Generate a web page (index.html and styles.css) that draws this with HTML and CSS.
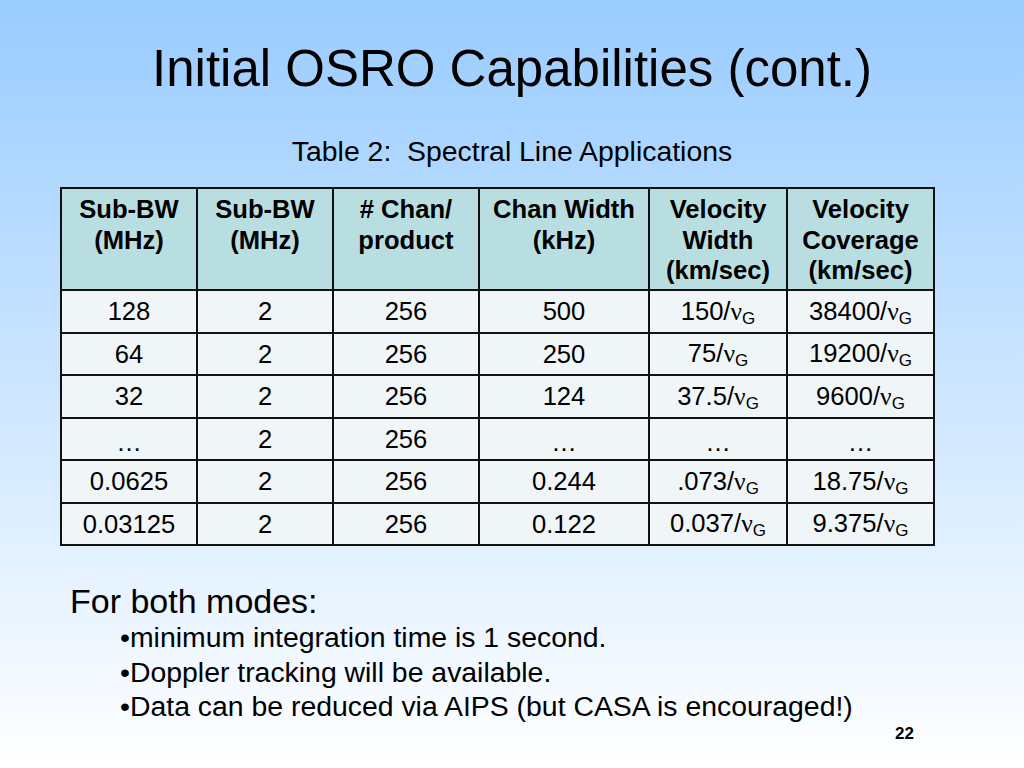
FILE: index.html
```html
<!DOCTYPE html>
<html>
<head>
<meta charset="utf-8">
<link rel="stylesheet" href="styles.css">
</head>
<body>
<div class="slide">
  <h1 class="title">Initial OSRO Capabilities (cont.)</h1>
  <p class="subtitle">Table 2:&nbsp; Spectral Line Applications</p>
  <table class="grid">
    <colgroup>
      <col class="c1"><col class="c2"><col class="c3"><col class="c4"><col class="c5"><col class="c6">
    </colgroup>
    <thead>
      <tr>
        <th>Sub-BW<br>(MHz)</th>
        <th>Sub-BW<br>(MHz)</th>
        <th># Chan/<br>product</th>
        <th>Chan Width<br>(kHz)</th>
        <th>Velocity<br>Width<br>(km/sec)</th>
        <th>Velocity<br>Coverage<br>(km/sec)</th>
      </tr>
    </thead>
    <tbody>
      <tr><td>128</td><td>2</td><td>256</td><td>500</td><td>150/<span class="nu">ν</span><sub>G</sub></td><td>38400/<span class="nu">ν</span><sub>G</sub></td></tr>
      <tr><td>64</td><td>2</td><td>256</td><td>250</td><td>75/<span class="nu">ν</span><sub>G</sub></td><td>19200/<span class="nu">ν</span><sub>G</sub></td></tr>
      <tr><td>32</td><td>2</td><td>256</td><td>124</td><td>37.5/<span class="nu">ν</span><sub>G</sub></td><td>9600/<span class="nu">ν</span><sub>G</sub></td></tr>
      <tr><td><span class="dots">…</span></td><td>2</td><td>256</td><td><span class="dots">…</span></td><td><span class="dots">…</span></td><td><span class="dots">…</span></td></tr>
      <tr><td>0.0625</td><td>2</td><td>256</td><td>0.244</td><td>.073/<span class="nu">ν</span><sub>G</sub></td><td>18.75/<span class="nu">ν</span><sub>G</sub></td></tr>
      <tr><td>0.03125</td><td>2</td><td>256</td><td>0.122</td><td>0.037/<span class="nu">ν</span><sub>G</sub></td><td>9.375/<span class="nu">ν</span><sub>G</sub></td></tr>
    </tbody>
  </table>
  <div class="notes">
    <p class="lead">For both modes:</p>
    <ul class="bullets">
      <li>minimum integration time is 1 second.</li>
      <li>Doppler tracking will be available.</li>
      <li>Data can be reduced via AIPS (but CASA is encouraged!)</li>
    </ul>
  </div>
  <div class="footer"><span class="pagenum">22</span></div>
</div>
</body>
</html>
```

FILE: styles.css
```css
html, body {
  margin: 0;
  padding: 0;
}
body {
  width: 1024px;
  height: 768px;
  overflow: hidden;
  font-family: "Liberation Sans", Arial, sans-serif;
  color: #000;
  background: linear-gradient(to bottom, #99ccff 0%, #ffffff 100%);
}
.slide {
  width: 1024px;
  height: 768px;
  display: flex;
  flex-direction: column;
  box-sizing: border-box;
}
.title {
  margin: 38px 0 0;
  font-weight: normal;
  font-size: 51px;
  line-height: 61px;
  text-align: center;
}
.subtitle {
  margin: 35px 0 0;
  font-size: 28.4px;
  line-height: 34px;
  text-align: center;
}
.grid {
  margin: 19px 0 0 60px;
  width: 873px;
  border-collapse: collapse;
  table-layout: fixed;
  font-size: 25.6px;
}
.c1 { width: 136px; }
.c2 { width: 136px; }
.c3 { width: 146px; }
.c4 { width: 170px; }
.c5 { width: 138px; }
.c6 { width: 147px; }
.grid th, .grid td {
  border: 2px solid #111;
  text-align: center;
  padding: 0;
}
.grid th {
  background: #b9dee2;
  font-weight: bold;
  line-height: 30.7px;
  height: 102px;
  vertical-align: top;
  padding-top: 5px;
  box-sizing: border-box;
}
.grid td {
  background: #f0f5f8;
  height: 40.5px;
  line-height: 30px;
  vertical-align: middle;
}
.dots {
  display: inline-block;
  line-height: 20px;
  vertical-align: -3px;
}
.nu {
  font-family: "Liberation Serif", "Times New Roman", serif;
}
.grid sub {
  font-size: 17px;
  line-height: 0;
  vertical-align: -4px;
}
.notes {
  margin: 36px 0 0 70px;
}
.lead {
  margin: 0;
  font-size: 34px;
  line-height: 38px;
}
.bullets {
  list-style: none;
  margin: 0;
  padding: 0 0 0 50px;
  font-size: 28.4px;
  line-height: 34.5px;
}
.bullets li::before {
  content: "•";
}
.footer {
  margin-top: auto;
  padding: 0 110px 35px 0;
  text-align: right;
}
.pagenum {
  font-weight: bold;
  font-size: 17px;
  line-height: 20px;
}
```
